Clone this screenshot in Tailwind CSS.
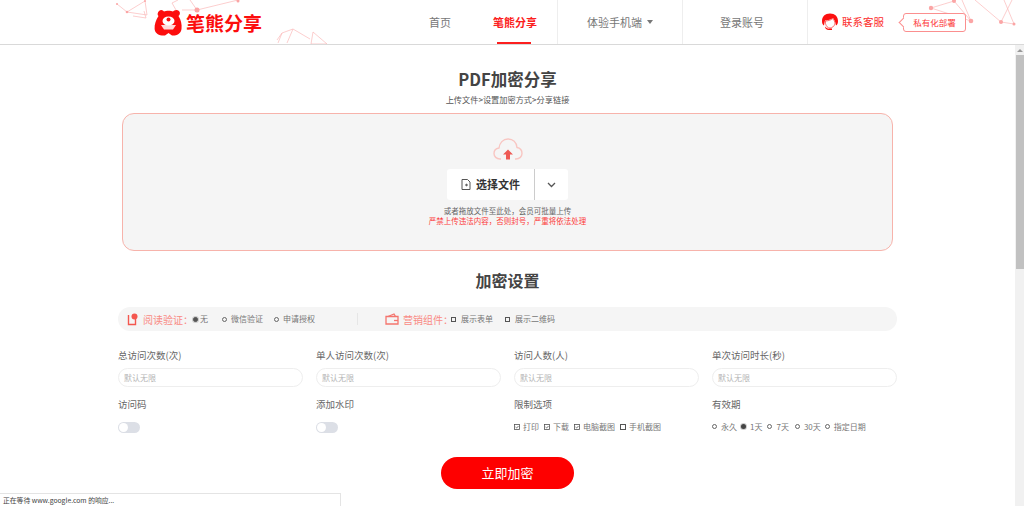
<!DOCTYPE html>
<html lang="zh-CN">
<head>
  <meta charset="UTF-8" />
  <title>PDF加密分享</title>
  <script src="https://cdn.jsdelivr.net/npm/@tailwindcss/browser@4"></script>
</head>
<body class="h-[506px] overflow-hidden bg-white font-['Noto_Sans_CJK_SC','Noto_Sans',sans-serif] text-[#666]">

  <!-- header -->
  <header class="relative flex h-[45px] border-b border-[#d9d9d9] bg-white">
    <svg class="absolute left-0 top-0" width="1024" height="44" fill="none" stroke="#fbb9b9" stroke-width="0.7">
      <path d="M117 4L127 12L145 1L147 15L127 12M133 16L146 18L144 11M172 3L178 0M172 3L176 10M197 10L238 0M197 10L190 0M197 10L182 10" />
      <path d="M277 40L282 33L293 29L310 39M282 33L278 43M293 29L287 43M313 32L327 44L311 44Z" />
      <path d="M931 8L954 1M931 8L971 21M954 1L971 21M971 21L962 0M1001 22L975 0M1001 22L1014 24M1001 22L1012 0M1014 24L1004 0" />
      <g fill="#fba5a5" stroke="none">
        <circle cx="197" cy="10" r="2.500" /><circle cx="127" cy="12" r="1.300" /><circle cx="238" cy="1" r="1.500" />
        <circle cx="117" cy="4" r="1" /><circle cx="145" cy="1" r="1" /><circle cx="931" cy="8" r="2.200" />
        <circle cx="954" cy="1" r="2" /><circle cx="971" cy="21" r="2.300" /><circle cx="1001" cy="22" r="2" /><circle cx="1014" cy="24" r="1.500" />
      </g>
    </svg>

    <div class="relative ml-[154px] flex items-center gap-[3px]">
      <svg width="29" height="27" viewBox="0 0 29 27" class="mt-[1px]">
        <path fill="#fc0d0d" d="M5 2C7 0 9 1 10 2.500C12 1.500 17 1.500 19 2.500C20 1 23 0 25 2C26.500 3.500 26 6 24.500 7C27 11 28 15 27.500 20C27 25 22 27 18 26.500L14.500 24L11 26.500C6 27 1 25 .6 20C.3 15 2 11 4.500 7C3 6 3.500 3.500 5 2Z" />
        <ellipse cx="14.500" cy="12" rx="6" ry="4.500" fill="#fff" />
        <circle cx="14.500" cy="10.500" r="2" fill="#fc0d0d" />
        <path fill="#fff" d="M7 16H22L19 20.500H10Z" opacity=".85" />
      </svg>
      <span class="text-[19px] font-bold leading-none text-[#fc0d0d]">笔熊分享</span>
    </div>

    <nav class="absolute left-[429px] top-0 flex h-[44px] items-center text-[11px] text-[#777]">
      <a class="w-[64px]">首页</a>
      <a class="relative flex h-full w-[64px] items-center font-bold text-[#fc2020]">笔熊分享
        <span class="absolute bottom-0 left-[4px] h-[2px] w-[34px] bg-[#fc1f1f]"></span>
      </a>
      <span class="h-full w-[30px] border-l border-[#eee]"></span>
      <a class="flex w-[95px] items-center gap-[5px]">体验手机端
        <span class="h-0 w-0 border-x-[3px] border-t-[4px] border-x-transparent border-t-[#777]"></span>
      </a>
      <span class="h-full w-[38px] border-l border-[#eee]"></span>
      <a class="w-[87px]">登录账号</a>
      <span class="h-full w-[14px] border-l border-[#eee]"></span>
      <svg width="18" height="18" viewBox="0 0 18 18">
        <path fill="#fc1010" d="M9 .5C4 .5 1 3.500 1 8C1 10 1.500 11.500 3 12.500C3.500 10.500 3.500 9 4 7.500C7 7.500 10 6.500 12 5C13 6.500 14 8 14.500 10L15 12.500C16.500 11.500 17 10 17 8C17 3.500 14 .5 9 .5Z" />
        <path fill="#fc1010" d="M4 13.500C5 15 7 16 9 15.500H11V17H8C5.500 17 4 15.500 4 13.500Z" />
        <path fill="#fff" stroke="#fc1010" stroke-width=".6" d="M4.500 8C7 8 10 7 12 5.500C13 7 14 9 14 11C13 13.500 11 15 9 15C6.500 15 5 13 4.500 10.500Z" />
      </svg>
      <span class="ml-[3px] text-[10.500px] text-[#fc2a2a]">联系客服</span>
      <span class="relative ml-[19px] flex h-[19px] w-[63px] items-center justify-center rounded-[3px] border border-[#fb8f8f] bg-white text-[8.500px] text-[#fc3a3a]">私有化部署
        <span class="absolute left-[-4px] top-[5px] size-[7px] rotate-45 border-b border-l border-[#fb8f8f] bg-white"></span>
      </span>
    </nav>
  </header>

  <div class="flex h-[461px]">
    <main class="w-[1015px] shrink-0">
      <h1 class="mt-[23px] text-center text-[16.500px] font-bold leading-[22px] text-[#444]">PDF加密分享</h1>
      <p class="mt-[4px] text-center text-[8.200px] leading-[11px] text-[#555]">上传文件&gt;设置加密方式&gt;分享链接</p>

      <!-- upload -->
      <section class="ml-[122px] mt-[8px] flex h-[138px] w-[771px] flex-col items-center rounded-[12px] border border-[#f7b3ab] bg-[#f5f5f5]">
        <svg class="mt-[24px]" width="30" height="25" viewBox="0 0 30 25" fill="none">
          <path stroke="#f8c6c2" stroke-width="1.400" d="M8 21H7C3.500 21 1 18.500 1 15.500C1 12.500 3 10.500 6 10C6.500 5 10 1 15 1C20 1 23.500 4.500 24 9.500C27 10 29 12.500 29 15.500C29 18.500 26.500 21 23 21H22" />
          <path fill="#ee5a55" d="M15 11.500L20 16.500H17V21.500H13V16.500H10Z" />
        </svg>
        <div class="mt-[6px] flex h-[31px] w-[121px] rounded-[3px] bg-white">
          <div class="flex w-[88px] items-center justify-center gap-[5px] border-r border-[#ccc] text-[11px] font-bold text-[#333]">
            <svg width="10" height="13" viewBox="0 0 10 13" fill="none" stroke="#555" stroke-width="1">
              <path d="M1 1.500H6.500L9 4V11.500H1Z" /><circle cx="5.500" cy="7" r=".8" fill="#555" />
            </svg>
            选择文件
          </div>
          <div class="flex flex-1 items-center justify-center">
            <svg width="9" height="6" viewBox="0 0 9 6" fill="none" stroke="#555" stroke-width="1.300"><path d="M1 1L4.500 4.500L8 1" /></svg>
          </div>
        </div>
        <p class="mt-[6px] text-[7.500px] leading-[10px] text-[#666]">或者拖放文件至此处，会员可批量上传</p>
        <p class="text-[7.500px] leading-[10px] text-[#fc3a3a]">严禁上传违法内容，否则封号，严重将依法处理</p>
      </section>

      <h2 class="mt-[17px] text-center text-[16px] font-bold leading-[24px] text-[#444]">加密设置</h2>

      <!-- options bar -->
      <div class="ml-[118px] mt-[15px] flex h-[24px] w-[779px] items-center rounded-full bg-[#f5f5f5] text-[8px] text-[#777]">
        <svg class="ml-[9px]" width="11" height="13" viewBox="0 0 11 13">
          <path fill="none" stroke="#f4574f" stroke-width="1.400" d="M1.500 2V11.500H8.500V6" />
          <circle cx="7.500" cy="3.500" r="3" fill="#f4574f" />
        </svg>
        <span class="ml-[5px] text-[10px] text-[#f98b85]">阅读验证：</span>
        <span class="flex items-center gap-[2px]"><i class="size-[5px] rounded-full border border-[#555] bg-[#555] ring-1 ring-[#ccc]"></i>无</span>
        <span class="ml-[14px] flex items-center gap-[4px]"><i class="size-[5px] rounded-full border border-[#666]"></i>微信验证</span>
        <span class="ml-[11px] flex items-center gap-[4px]"><i class="size-[5px] rounded-full border border-[#666]"></i>申请授权</span>
        <span class="ml-[42px] h-[12px] border-l border-[#e6e6e6]"></span>
        <svg class="ml-[27px]" width="14" height="12" viewBox="0 0 14 12" fill="none" stroke="#f4756e" stroke-width="1.300">
          <path d="M1 3.500H13V11H1Z" /><path d="M3 3.500L9 1L10.500 3.500" /><path d="M9 7.500H13" />
        </svg>
        <span class="ml-[4px] w-[48px] whitespace-nowrap text-[10px] text-[#f98b85]">营销组件：</span>
        <span class="flex items-center gap-[5px]"><i class="size-[5px] border border-[#555]"></i>展示表单</span>
        <span class="ml-[12px] flex items-center gap-[5px]"><i class="size-[5px] border border-[#555]"></i>展示二维码</span>
      </div>

      <!-- fields -->
      <div class="ml-[118px] mt-[17px] grid w-[779px] grid-cols-4 gap-x-[13px] text-[9.500px] text-[#666]">
        <div>
          <label class="block leading-[15px]">总访问次数(次)</label>
          <div class="mt-[5px] flex h-[19px] items-center rounded-full border border-[#eee] pl-[5px] text-[8px] text-[#b5b5b5]">默认无限</div>
        </div>
        <div>
          <label class="block leading-[15px]">单人访问次数(次)</label>
          <div class="mt-[5px] flex h-[19px] items-center rounded-full border border-[#eee] pl-[5px] text-[8px] text-[#b5b5b5]">默认无限</div>
        </div>
        <div>
          <label class="block leading-[15px]">访问人数(人)</label>
          <div class="mt-[5px] flex h-[19px] items-center rounded-full border border-[#eee] pl-[5px] text-[8px] text-[#b5b5b5]">默认无限</div>
        </div>
        <div>
          <label class="block leading-[15px]">单次访问时长(秒)</label>
          <div class="mt-[5px] flex h-[19px] items-center rounded-full border border-[#eee] pl-[5px] text-[8px] text-[#b5b5b5]">默认无限</div>
        </div>

        <div class="mt-[10px]">
          <label class="block leading-[15px]">访问码</label>
          <span class="mt-[10px] flex h-[11px] w-[22px] items-center rounded-full bg-[#dcdfe6] pl-[1px]"><i class="size-[9px] rounded-full bg-white"></i></span>
        </div>
        <div class="mt-[10px]">
          <label class="block leading-[15px]">添加水印</label>
          <span class="mt-[10px] flex h-[11px] w-[22px] items-center rounded-full bg-[#dcdfe6] pl-[1px]"><i class="size-[9px] rounded-full bg-white"></i></span>
        </div>
        <div class="mt-[10px]">
          <label class="block leading-[15px]">限制选项</label>
          <div class="mt-[7px] flex items-center text-[8px] leading-[15px] text-[#777]">
            <span class="flex items-center gap-[3px]">
              <svg width="6" height="6" viewBox="0 0 6 6" fill="none" stroke="#555" stroke-width=".8"><rect x=".5" y=".5" width="5" height="5" /><path d="M1.500 3L2.600 4L4.500 2" /></svg>打印</span>
            <span class="ml-[5px] flex items-center gap-[3px]">
              <svg width="6" height="6" viewBox="0 0 6 6" fill="none" stroke="#555" stroke-width=".8"><rect x=".5" y=".5" width="5" height="5" /><path d="M1.500 3L2.600 4L4.500 2" /></svg>下载</span>
            <span class="ml-[5px] flex items-center gap-[3px]">
              <svg width="6" height="6" viewBox="0 0 6 6" fill="none" stroke="#555" stroke-width=".8"><rect x=".5" y=".5" width="5" height="5" /><path d="M1.500 3L2.600 4L4.500 2" /></svg>电脑截图</span>
            <span class="ml-[5px] flex items-center gap-[3px]"><i class="size-[6px] border border-[#555]"></i>手机截图</span>
          </div>
        </div>
        <div class="mt-[10px]">
          <label class="block leading-[15px]">有效期</label>
          <div class="mt-[7px] flex items-center text-[8px] leading-[15px] text-[#777]">
            <span class="flex items-center gap-[4px]"><i class="size-[5px] rounded-full border border-[#666]"></i>永久</span>
            <span class="ml-[4px] flex items-center gap-[4px]"><i class="size-[5px] rounded-full bg-[#444] ring-1 ring-[#ccc]"></i>1天</span>
            <span class="ml-[5px] flex items-center gap-[4px]"><i class="size-[5px] rounded-full border border-[#666]"></i>7天</span>
            <span class="ml-[6px] flex items-center gap-[4px]"><i class="size-[5px] rounded-full border border-[#666]"></i>30天</span>
            <span class="ml-[4px] flex items-center gap-[4px]"><i class="size-[5px] rounded-full border border-[#666]"></i>指定日期</span>
          </div>
        </div>
      </div>

      <button class="ml-[441px] mt-[23px] block h-[32px] w-[133px] rounded-full bg-[#fe0000] text-[13px] text-white">立即加密</button>
    </main>

    <!-- scrollbar -->
    <div class="flex flex-1 flex-col bg-[#f1f1f1] pl-[1px]">
      <div class="flex h-[10px] items-center justify-center"><span class="h-0 w-0 border-x-[3px] border-b-[3px] border-x-transparent border-b-[#999]"></span></div>
      <div class="h-[214px] bg-[#c1c1c1]"></div>
    </div>
  </div>

  <!-- browser status bubble -->
  <div class="absolute bottom-0 left-0 flex h-[13px] w-[341px] items-center border-r border-t border-[#e4e4e4] bg-white pl-[3px] text-[6.800px] text-[#444]">正在等待 www.google.com 的响应...</div>
</body>
</html>
